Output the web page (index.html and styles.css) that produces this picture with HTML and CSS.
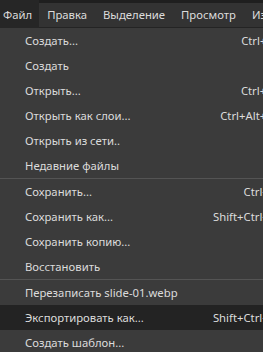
FILE: index.html
```html
<!DOCTYPE html>
<html lang="ru">
<head>
<meta charset="utf-8">
<link rel="stylesheet" href="styles.css">
</head>
<body>
<div class="menubar">
  <div class="tab active">Файл</div>
  <div class="tab">Правка</div>
  <div class="tab">Выделение</div>
  <div class="tab">Просмотр</div>
  <div class="tab">Изображение</div>
</div>
<div class="menu">
  <div class="item"><span class="label">Создать...</span><span class="key">Ctrl+N</span></div>
  <div class="item"><span class="label">Создать</span><span class="key"></span></div>
  <div class="item"><span class="label">Открыть...</span><span class="key">Ctrl+O</span></div>
  <div class="item"><span class="label">Открыть как слои...</span><span class="key">Ctrl+Alt+O</span></div>
  <div class="item"><span class="label">Открыть из сети..</span><span class="key"></span></div>
  <div class="item"><span class="label">Недавние файлы</span><span class="key"></span></div>
  <div class="sep"></div>
  <div class="item"><span class="label">Сохранить...</span><span class="key">Ctrl+S</span></div>
  <div class="item"><span class="label">Сохранить как...</span><span class="key">Shift+Ctrl+S</span></div>
  <div class="item"><span class="label">Сохранить копию...</span><span class="key"></span></div>
  <div class="item"><span class="label">Восстановить</span><span class="key"></span></div>
  <div class="sep"></div>
  <div class="item"><span class="label">Перезаписать slide-01.webp</span><span class="key"></span></div>
  <div class="item hover"><span class="label">Экспортировать как...</span><span class="key">Shift+Ctrl+E</span></div>
  <div class="item"><span class="label">Создать шаблон...</span><span class="key"></span></div>
</div>
</body>
</html>
```
FILE: styles.css
```css
html, body {
  margin: 0;
  padding: 0;
  background: #3b3b3b;
  overflow: hidden;
  width: 263px;
  height: 352px;
}
body {
  font-family: "Noto Sans", "Open Sans", sans-serif;
  font-size: 11.3px;
  color: #dcdcdc;
}
.menubar {
  display: flex;
  width: 400px;
  height: 24px;
  background: #333333;
  border-top: 3px solid #1f1f1f;
  border-bottom: 1px solid #242424;
  white-space: nowrap;
}
.tab {
  padding: 0 8px;
  line-height: 24px;
}
.tab.active {
  background: #262626;
  margin-top: -3px;
  padding: 3px 7px 0 3px;
  height: 25px;
  margin-bottom: -1px;
}
.menu {
  width: 300px;
}
.item {
  display: flex;
  justify-content: space-between;
  height: 25px;
  line-height: 25px;
  padding: 0 25px 0 25px;
  white-space: nowrap;
}
.item.hover {
  background: #232323;
}
.sep {
  height: 1px;
  background: #545454;
}
```
